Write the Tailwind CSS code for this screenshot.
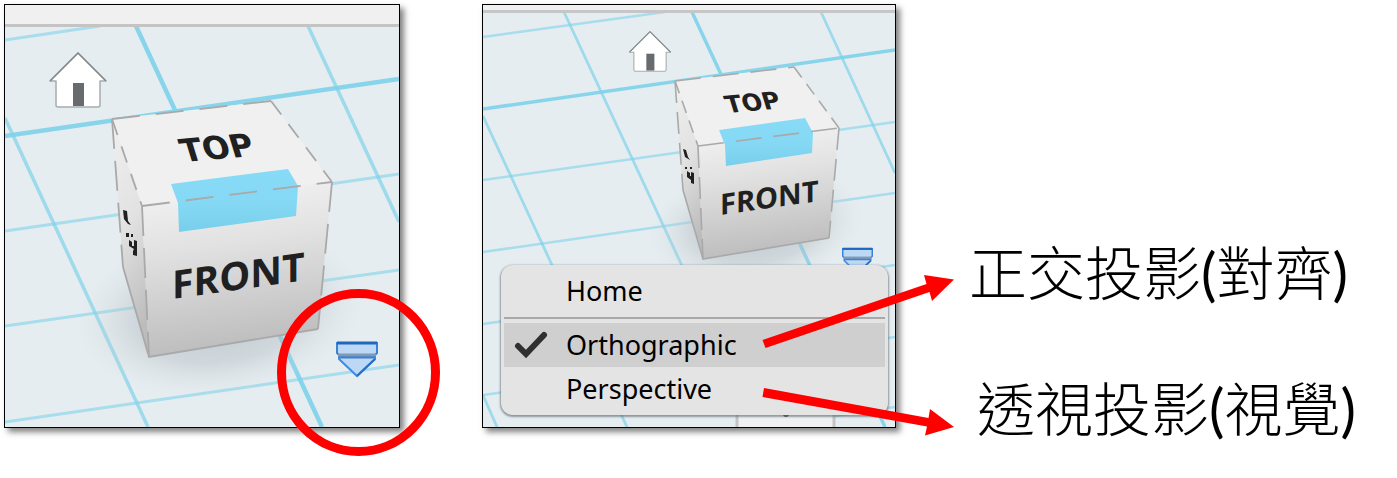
<!DOCTYPE html>
<html lang="zh-Hant">
<head>
<meta charset="utf-8">
<title>View cube projection modes</title>
<meta name="viewport" content="width=device-width, initial-scale=1">
<script src="https://cdn.jsdelivr.net/npm/@tailwindcss/browser@4"></script>
</head>
<body class="bg-white text-black">
<svg class="absolute size-0" aria-hidden="true">
  <defs>
    <linearGradient id="front" x1="0" y1="0" x2="0.15" y2="1">
      <stop offset="0" stop-color="#f4f4f4"/><stop offset="0.4" stop-color="#e2e2e2"/><stop offset="1" stop-color="#bdbdbd"/>
    </linearGradient>
    <linearGradient id="side" x1="0" y1="0" x2="0.2" y2="1">
      <stop offset="0" stop-color="#f0f0f0"/><stop offset="0.5" stop-color="#e2e2e2"/><stop offset="1" stop-color="#bcbcbc"/>
    </linearGradient>
    <linearGradient id="tab" x1="0" y1="0" x2="0" y2="1">
      <stop offset="0" stop-color="#88dbf6"/><stop offset="0.5" stop-color="#86d9f4"/><stop offset="1" stop-color="#78cfeb"/>
    </linearGradient>
    <radialGradient id="shade">
      <stop offset="0" stop-color="#a9b3b8" stop-opacity="0.7"/><stop offset="0.6" stop-color="#b4bec3" stop-opacity="0.45"/><stop offset="1" stop-color="#d4dce0" stop-opacity="0"/>
    </radialGradient>
    <symbol id="house" viewBox="0 0 60 58">
      <path d="M30 2 2 30H8V54Q8 56 10 56H50Q52 56 52 54V30H58Z" fill="#fff" stroke="#a8acae" stroke-width="1.5" stroke-linejoin="round"/>
      <path d="M2 30 30 2 58 30" fill="none" stroke="#858b8e" stroke-width="1.5"/>
      <path d="M25 32H36V55H25Z" fill="#686b6e"/>
    </symbol>
    <symbol id="chevron" viewBox="0 0 42 37">
      <path d="M1 2H41V12L39 14H3L1 12Z" fill="#bcd8f5" stroke="#3b82d6" stroke-width="2"/>
      <path d="M1 2H41" stroke="#1f68bd" stroke-width="3"/>
      <path d="M3 16V18L21 35 39 18V16Z" fill="#bcd8f5" stroke="#3f8ce6" stroke-width="2"/>
      <path d="M39 18 21 35" stroke="#256fc6" stroke-width="2"/>
      <path d="M2 14H40" stroke="#8299b4" stroke-width="3"/><path d="M3 16.500H39" stroke="#467fc6" stroke-width="2"/>
    </symbol>
  </defs>
</svg>

<main class="grid min-h-screen grid-cols-[396fr_82fr_414fr_497fr] items-start p-1">
  <figure class="relative border border-black shadow-[4px_4px_6px_rgba(0,0,0,0.5)]">
    <svg class="block w-full h-auto" viewBox="5 5 394 422" role="group" aria-label="View cube">
      <path fill="#e6edf1" d="M5 5H399V427H5Z"/>
      <g stroke="#7dd2ea" fill="none">
        <path stroke-width="3" opacity=".6" d="M5 40 100 26M5 231 399 174M5 326 399 270M5 422 399 365"/>
        <path stroke-width="3.5" opacity=".7" d="M5 118 148 427M308 26 399 222"/>
        <path stroke-width="4.5" opacity=".9" d="M5 136 399 79M136 26 322 427"/>
      </g>
      <path fill="#f0f0f0" d="M5 5H399V24H5Z"/><path fill="#c4c4c4" d="M5 24H399V27H5Z"/>
      <ellipse cx="220" cy="312" rx="145" ry="84" fill="url(#shade)" transform="rotate(-8 220 312)"/>
      <path fill="#f0f0f0" d="M112 119 271 101 332 182 142 206Z"/>
      <path fill="url(#side)" d="M112 119 142 206 149 357 123 267Z"/>
      <path fill="url(#front)" d="M142 206 332 182 318 329 149 357Z"/>
      <path fill="url(#tab)" d="M171 184 288 169 298 186 296 216 179 232 178 203Z"/>
      <g fill="none" stroke="#a9a9a9" stroke-width="1.8">
        <path stroke-dasharray="28 16" d="M112 119 271 101M142 206 332 182"/>
        <path stroke-dasharray="17 12" d="M112 119 142 206M271 101 332 182"/>
        <path stroke-dasharray="30 12" d="M112 119 123 267M142 206 149 357M332 182 318 329"/>
        <path d="M123 267 149 357 318 329"/>
      </g>
      <g fill="#202020"><path d="M123 210 127 211 128 221 131 225 128 224 124 219Z"/><path d="M126 233h3v4h-3zM131 234h2v3h-2zM129 240l3 2v4h2v-6l3 1v15l-4-1v-4l1-2-5-3z"/></g>
      <text class="font-['DejaVu_Sans'] font-bold" font-size="32" fill="#202020" transform="translate(184 162) rotate(-5) skewX(12)">TOP</text>
      <text class="font-['Open_Sans'] font-bold" font-size="39" fill="#202020" transform="translate(172 299) skewY(-8)">FRONT</text>
      <foreignObject x="48" y="51" width="60" height="58"><button type="button" aria-label="Home view" class="block size-full"><svg class="block size-full"><use href="#house"/></svg></button></foreignObject>
      <foreignObject x="336" y="341" width="42" height="37"><button type="button" aria-label="View options" class="block size-full"><svg class="block size-full"><use href="#chevron"/></svg></button></foreignObject>
    </svg>
    <svg class="absolute inset-0 size-full overflow-visible pointer-events-none" viewBox="5 5 394 422" aria-hidden="true">
      <ellipse cx="358.5" cy="372.5" rx="77" ry="79" fill="none" stroke="#f00" stroke-width="9"/>
    </svg>
  </figure>

  <figure class="relative col-start-3 border border-black shadow-[4px_4px_6px_rgba(0,0,0,0.5)]">
    <svg class="block w-full h-auto" viewBox="483 5 412 422" role="group" aria-label="View cube with menu">
      <path fill="#e6edf1" d="M483 5H895V427H483Z"/>
      <g stroke="#7dd2ea" fill="none">
        <path stroke-width="2.5" opacity=".6" d="M483 37 665 12M483 180 895 122M483 252 895 193M483 324 895 265M483 395 895 337M835 416 895 407"/>
        <path stroke-width="2.8" opacity=".7" d="M483 116 627 427M564 12 757 427M821 12 895 173M483 395 497 427"/>
        <path stroke-width="3.5" opacity=".9" d="M483 109 895 50M692 12 885 427"/>
      </g>
      <path fill="#f0f0f0" d="M483 5H895V10H483Z"/><path fill="#c6c6c6" d="M483 10H895V13H483Z"/>
      <ellipse cx="756" cy="226" rx="108" ry="62" fill="url(#shade)" transform="rotate(-8 756 226)"/>
      <path fill="#f0f0f0" d="M675 81 794 67 839 128 698 146Z"/>
      <path fill="url(#side)" d="M675 81 698 146 703 259 683 190Z"/>
      <path fill="url(#front)" d="M698 146 839 128 829 238 703 259Z"/>
      <path fill="url(#tab)" d="M719 130 805 118 813 133 812 153 726 166 725 145Z"/>
      <g fill="none" stroke="#a9a9a9" stroke-width="1.6">
        <path stroke-dasharray="26 12" d="M675 81 794 67M698 146 839 128"/>
        <path stroke-dasharray="13 8" d="M675 81 698 146M794 67 839 128"/>
        <path stroke-dasharray="22 9" d="M675 81 683 190M698 146 703 259M839 128 829 238"/>
        <path d="M683 190 703 259 829 238"/>
      </g>
      <g fill="#202020"><path d="M683 149 686 150 688 157 690 160 685 157Z"/><path d="M685 167h2v2h-2zM690 167h2v2h-2zM687 171l3 2v3h1v-4l3 1v11l-3-1v-3l-4-3z"/></g>
      <text class="font-['DejaVu_Sans'] font-bold" font-size="24" fill="#202020" transform="translate(728 113) rotate(-5) skewX(12)">TOP</text>
      <text class="font-['Open_Sans'] font-bold" font-size="29" fill="#202020" transform="translate(720 215) skewY(-8)">FRONT</text>
      <path fill="#f0f0f0" d="M737 400H834V427H737Z"/><path fill="none" stroke="#c4c4c4" stroke-width="3" d="M737 400V427M834 400V427"/><circle cx="786" cy="414" r="3" fill="#555"/>
      <foreignObject x="628" y="30" width="44" height="43"><button type="button" aria-label="Home view" class="block size-full"><svg class="block size-full"><use href="#house"/></svg></button></foreignObject>
      <foreignObject x="842" y="247" width="31" height="28"><button type="button" aria-label="View options" class="block size-full"><svg class="block size-full"><use href="#chevron"/></svg></button></foreignObject>
    </svg>
    <div role="menu" class="absolute bottom-3 left-[18px] right-[7px] flex flex-col rounded-xl bg-[#e4e4e4] px-[3px] pt-1 pb-1 font-['Noto_Sans',sans-serif] text-[27px] leading-[44px] shadow-[0_1px_2px_1px_rgba(80,95,105,0.6)]">
      <button type="button" role="menuitem" class="pl-[62px] text-left">Home</button>
      <hr class="mt-1 mb-1 border-t-2 border-[#a8a8a8]">
      <button type="button" role="menuitemradio" aria-checked="true" class="flex items-center bg-[#cfcfcf] pl-2 text-left">
        <svg class="mr-[18px] h-8 w-9 shrink-0" viewBox="0 0 36 32" fill="none" stroke="#303030" stroke-width="6" stroke-linecap="round"><path d="M6 17 14 25 32 6"/></svg>Orthographic</button>
      <button type="button" role="menuitemradio" aria-checked="false" class="pl-[62px] text-left">Perspective</button>
    </div>
    <svg class="absolute inset-0 z-10 size-full overflow-visible pointer-events-none" viewBox="483 5 412 422" aria-hidden="true" fill="#f00">
      <path d="M762.5 340 926.500 284 924 275 954 279.500 932 301 929.500 292 765.500 348Z"/>
      <path d="M764 388 928.500 418 930 409 954 427 925 435.500 927 426.500 762.500 397Z"/>
    </svg>
  </figure>

  <div class="flex flex-col gap-[75px] pt-[237px] pl-[73px] font-['Noto_Sans_CJK_TC',sans-serif] text-[58px] leading-[58px] font-light whitespace-nowrap">
    <p>正交投影<span class="font-[Lato] font-normal">(</span>對齊<span class="font-[Lato] font-normal">)</span></p>
    <p class="pl-2">透視投影<span class="font-[Lato] font-normal">(</span>視覺<span class="font-[Lato] font-normal">)</span></p>
  </div>
</main>
</body>
</html>
